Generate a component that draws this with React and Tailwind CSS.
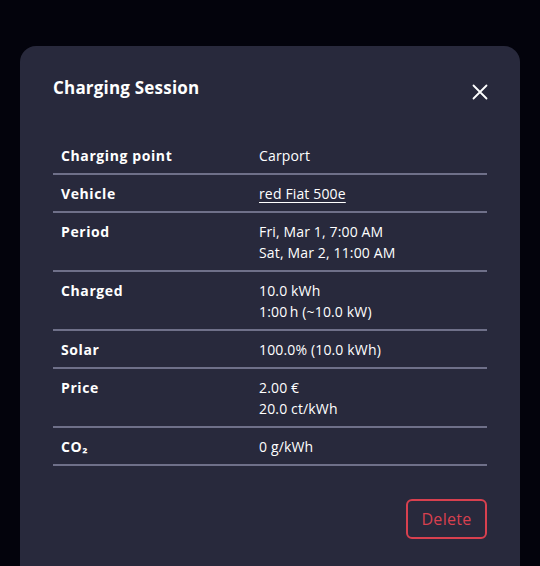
import React from "react";

const rows = [
  { label: "Charging point", value: ["Carport"] },
  { label: "Vehicle", value: ["red Fiat 500e"], link: true },
  { label: "Period", value: ["Fri, Mar 1, 7:00 AM", "Sat, Mar 2, 11:00 AM"] },
  { label: "Charged", value: ["10.0 kWh", "1:00\u2009h (~10.0 kW)"] },
  { label: "Solar", value: ["100.0% (10.0 kWh)"] },
  { label: "Price", value: ["2.00 €", "20.0 ct/kWh"] },
  { label: "CO₂", value: ["0 g/kWh"] },
];

export default function App() {
  return (
    <div
      className="w-[540px] h-[566px] overflow-hidden bg-[#03030c] pt-[46px] px-[20px]"
      style={{ fontFamily: '"Open Sans", "Noto Sans", sans-serif' }}
    >
      <div className="h-[540px] rounded-[16px] bg-[#28293c] px-[33px] pt-[28px] text-white">
        <div className="flex items-start justify-between">
          <h2 className="text-[17px] font-bold leading-[26px] pt-[1px] tracking-[0.2px]">Charging Session</h2>
          <button className="mt-[10px] mr-[-1px] text-white">
            <svg width="16" height="16" viewBox="0 0 16 16" fill="none" stroke="currentColor" strokeWidth="1.8" strokeLinecap="round">
              <path d="M1.5 1.5 L14.5 14.5 M14.5 1.5 L1.5 14.5" />
            </svg>
          </button>
        </div>
        <table className="mt-[36px] w-full border-collapse text-[14px] leading-[21px]">
          <tbody>
            {rows.map((r) => (
              <tr key={r.label} className="border-b-2 border-[#6f7089]">
                <th className="w-[198px] pt-[8px] pb-[7px] px-[8px] text-left align-top font-bold tracking-[0.6px]">{r.label}</th>
                <td className="pt-[8px] pb-[7px] px-[8px] align-top tracking-[0.15px]">
                  {r.value.map((v) => (
                    <div key={v} className={r.link ? "underline underline-offset-[3px]" : ""}>
                      {v}
                    </div>
                  ))}
                </td>
              </tr>
            ))}
          </tbody>
        </table>
        <div className="mt-[33px] flex justify-end">
          <button className="h-[40px] w-[81px] rounded-[6px] border-2 border-[#d8404f] text-[16px] text-[#d8404f] tracking-[0.3px]">
            Delete
          </button>
        </div>
      </div>
    </div>
  );
}
